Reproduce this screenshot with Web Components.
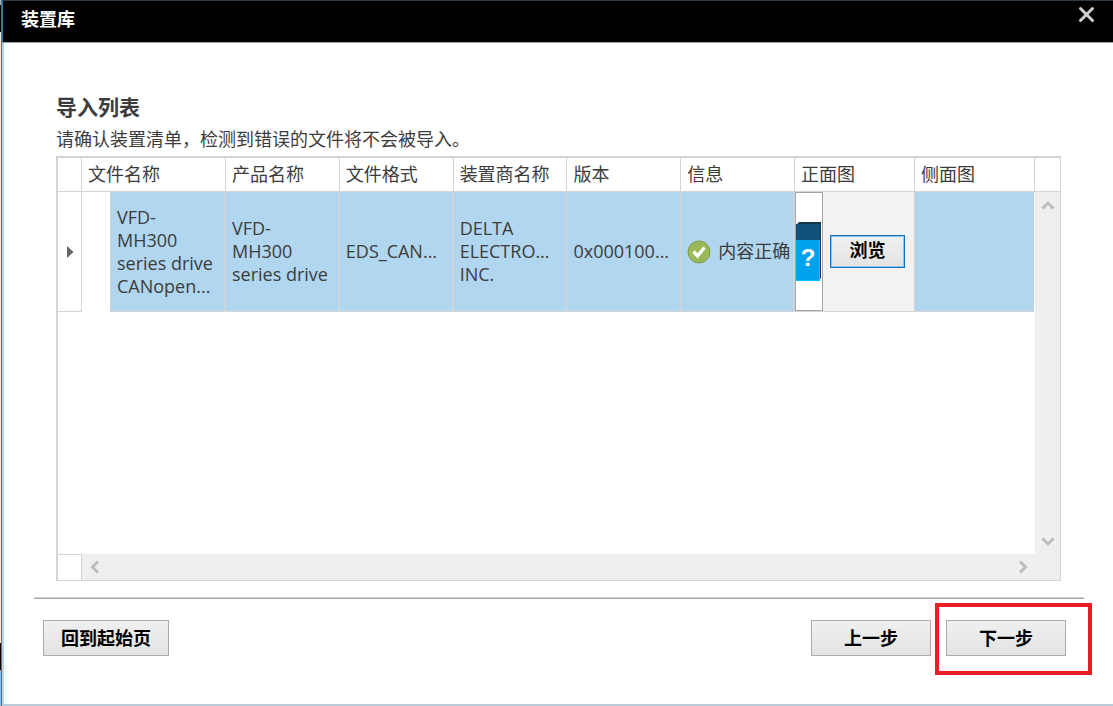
<!DOCTYPE html>
<html lang="zh-CN">
<head>
<meta charset="utf-8">
<title>装置库</title>
<style>
  html, body {
    margin: 0;
    height: 100%;
  }

  body {
    font-family: "Noto Sans CJK SC", "Open Sans", sans-serif;
    font-size: 18px;
    color: #3c3c3c;
    background: #fff;
  }
</style>
</head>
<body>

<library-dialog heading="装置库">
  <import-panel heading="导入列表" hint="请确认装置清单，检测到错误的文件将不会被导入。">
    <device-grid></device-grid>
  </import-panel>
  <wizard-footer slot="footer">
    <push-button slot="start">回到起始页</push-button>
    <push-button size="step">上一步</push-button>
    <push-button size="step" marked>下一步</push-button>
  </wizard-footer>
</library-dialog>

<script>
class LibraryDialog extends HTMLElement {
  constructor() {
    super();
    this.attachShadow({ mode: "open" });
  }

  connectedCallback() {
    this.shadowRoot.innerHTML = `
      <style>
        :host {
          display: flex;
          box-sizing: border-box;
          min-height: 100vh;
          padding-left: 1px;
          background: linear-gradient(#9fb4c4 0 5px, #000 5px 32px, #e8edf0 32px 643px, #000 643px 670px, #8fbbe0 670px);
        }

        .window {
          flex: 1;
          min-width: 0;
          display: flex;
          flex-direction: column;
          border-left: 1px solid #1a80d2;
          background: #fff;
        }

        header {
          display: flex;
          justify-content: space-between;
          align-items: flex-start;
          box-sizing: border-box;
          height: 43px;
          padding: 0 18px;
          background: #000;
          border-top: 1px solid #2c3942;
          border-left: 1px solid #4d6b80;
          border-bottom: 1px solid #a6a6a6;
        }

        h1 {
          margin: 0;
          font-size: 18px;
          line-height: 34px;
          color: #fff;
        }

        .close {
          display: flex;
          margin: 0;
          padding: 5px 0;
          border: 0;
          background: none;
          cursor: pointer;
        }

        main {
          flex: 1;
          display: flex;
          flex-direction: column;
          border-left: 2px solid #c3d2dc;
          border-bottom: 2px solid #bccbd6;
        }
      </style>
      <div class="window">
        <header>
          <h1>${this.getAttribute("heading")}</h1>
          <button class="close" aria-label="关闭">
            <svg width="17" height="17" viewBox="0 0 17 17">
              <path d="M2.500 2.500l12 12M14.500 2.500l-12 12" stroke="#d0d0d0" stroke-width="3" stroke-linecap="round"/>
            </svg>
          </button>
        </header>
        <main>
          <slot></slot>
          <slot name="footer"></slot>
        </main>
      </div>
    `;
  }
}

class ImportPanel extends HTMLElement {
  constructor() {
    super();
    this.attachShadow({ mode: "open" });
  }

  connectedCallback() {
    this.shadowRoot.innerHTML = `
      <style>
        :host {
          flex: 1;
          display: flex;
          flex-direction: column;
          padding: 48px 52px 0;
        }

        h2 {
          margin: 0;
          font-size: 21px;
          line-height: 30px;
        }

        p {
          margin: 0;
          line-height: 35px;
        }
      </style>
      <h2>${this.getAttribute("heading")}</h2>
      <p>${this.getAttribute("hint")}</p>
      <slot></slot>
    `;
  }
}

class PushButton extends HTMLElement {
  constructor() {
    super();
    this.attachShadow({ mode: "open" });
    this.shadowRoot.innerHTML = `
      <style>
        :host {
          display: block;
          position: relative;
        }

        button {
          display: flex;
          justify-content: center;
          box-sizing: border-box;
          height: 36px;
          padding: 0 17px;
          font: inherit;
          font-weight: bold;
          line-height: 32px;
          color: #000;
          white-space: nowrap;
          background: linear-gradient(#f0f0f0, #e3e3e3);
          border: 1px solid #acacac;
          cursor: pointer;
        }

        :host([size="step"]) button {
          width: 120px;
        }

        :host([size="small"]) button {
          width: 75px;
          height: 33px;
          padding: 0;
          line-height: 29px;
          border-color: #0a74c4;
          box-shadow: inset 0 0 0 1px #8fc3ea;
        }

        /* callout frame around the next action */
        :host([marked])::after {
          content: "";
          position: absolute;
          inset: -17px -26px -19px -11px;
          border: 4px solid #ed1c24;
          pointer-events: none;
        }
      </style>
      <button><slot></slot></button>
    `;
  }
}

class WizardFooter extends HTMLElement {
  constructor() {
    super();
    this.attachShadow({ mode: "open" });
    this.shadowRoot.innerHTML = `
      <style>
        :host {
          display: flex;
          justify-content: space-between;
          margin: 16px 29px 0 30px;
          padding: 21px 18px 48px 9px;
          border-top: 1px solid #d0d0d0;
          box-shadow: inset 0 1px #a6a6a6;
          padding-top: 22px;
        }

        .steps {
          display: flex;
          gap: 15px;
        }
      </style>
      <slot name="start"></slot>
      <div class="steps"><slot></slot></div>
    `;
  }
}

class ScrollTrack extends HTMLElement {
  constructor() {
    super();
    this.attachShadow({ mode: "open" });
  }

  connectedCallback() {
    const vertical = this.getAttribute("direction") === "vertical";
    const arrow = (label, path) => `
      <button aria-label="${label}">
        <svg width="14" height="14" viewBox="0 0 14 14">
          <path d="${path}" fill="none" stroke="#bdbdbd" stroke-width="3"/>
        </svg>
      </button>`;
    const arrows = vertical
      ? arrow("向上", "M1.5 10.500L7 5l5.500 5.500") + arrow("向下", "M1.500 4.500L7 10l5.500-5.500")
      : arrow("向左", "M10 1.500L4.500 7l5.500 5.500") + arrow("向右", "M4 1.500L9.500 7 4 12.500");

    this.shadowRoot.innerHTML = `
      <style>
        :host {
          flex: 1;
          display: flex;
          flex-direction: ${vertical ? "column" : "row"};
          justify-content: space-between;
          background: #efefef;
        }

        button {
          display: flex;
          justify-content: center;
          align-items: center;
          width: 25px;
          height: 26px;
          padding: 0;
          border: 0;
          background: none;
        }
      </style>
      ${arrows}
    `;
  }
}

class StatusLabel extends HTMLElement {
  constructor() {
    super();
    this.attachShadow({ mode: "open" });
    this.shadowRoot.innerHTML = `
      <style>
        :host {
          display: flex;
          align-items: center;
          gap: 7px;
          white-space: nowrap;
        }

        svg {
          flex: none;
        }
      </style>
      <svg width="24" height="24" viewBox="0 0 24 24">
        <circle cx="12" cy="12" r="11" fill="#9aba59" stroke="#7f9c48"/>
        <path d="M6.500 11.500l4 4.500 7-8.500" fill="none" stroke="#fff" stroke-width="3.4"/>
      </svg>
      <span><slot></slot></span>
    `;
  }
}

class PicturePicker extends HTMLElement {
  constructor() {
    super();
    this.attachShadow({ mode: "open" });
    this.shadowRoot.innerHTML = `
      <style>
        :host {
          display: flex;
          align-items: center;
          height: 119px;
          gap: 7px;
          background: #f2f2f2;
        }

        .thumb {
          display: flex;
          align-items: center;
          box-sizing: border-box;
          width: 28px;
          height: 119px;
          border: 1px solid #a5a5a5;
          background: #fff;
        }
      </style>
      <div class="thumb">
        <svg width="26" height="60" viewBox="0 0 26 60">
          <path d="M1 2L3 0h22v56l-1 1z" fill="#16384f"/>
          <path d="M0 2h24v16H0z" fill="#0f527c"/>
          <path d="M0 18h24v41H0z" fill="#00a2ed"/>
          <path d="M0 58.500h23.500V18" fill="none" stroke="#00c4ff"/>
          <text x="12" y="44" text-anchor="middle" font-family="Liberation Sans" font-size="24" font-weight="bold" fill="#fff">?</text>
        </svg>
      </div>
      <push-button size="small"><slot></slot></push-button>
    `;
  }
}

class DeviceGrid extends HTMLElement {
  constructor() {
    super();
    this.attachShadow({ mode: "open" });
    this.columns = ["文件名称", "产品名称", "文件格式", "装置商名称", "版本", "信息", "正面图", "侧面图"];
    this.rows = [{
      file: "VFD-<br>MH300<br>series drive<br>CANopen...",
      product: "VFD-<br>MH300<br>series drive",
      format: "EDS_CAN...",
      vendor: "DELTA<br>ELECTRO...<br>INC.",
      version: "0x000100...",
      info: "内容正确"
    }];
  }

  connectedCallback() {
    this.render();
  }

  render() {
    this.shadowRoot.innerHTML = `
      <style>
        :host {
          --line: #d4d4d4;
          flex: 1;
          display: flex;
          flex-direction: column;
          border: 1px solid var(--line);
          border-width: 2px 1px 1px 2px;
        }

        .view {
          flex: 1;
          display: flex;
        }

        .content {
          flex: 1;
          min-width: 0;
        }

        table {
          width: 100%;
          table-layout: fixed;
          border-collapse: separate;
          border-spacing: 0;
        }

        .marker-col { width: 24px; }
        .text-col { width: 11.65%; }
        .picture-col { width: 12.28%; }

        th, td {
          box-sizing: border-box;
          padding: 0 0 0 6px;
          border-right: 1px solid var(--line);
          border-bottom: 1px solid var(--line);
          text-align: left;
          white-space: nowrap;
        }

        th {
          height: 34px;
          font-weight: normal;
          line-height: 31px;
          vertical-align: top;
        }

        td {
          height: 120px;
          font-family: "Open Sans", "Noto Sans CJK SC", sans-serif;
          font-size: 18px;
          line-height: 23px;
          background: #b1d6f0;
          box-shadow: inset -1px 0 #c6d5e0;
        }

        td.marker {
          padding: 0 0 0 8px;
          background: #fff;
          box-shadow: none;
        }

        .marker svg {
          display: block;
        }

        td.file {
          padding: 0;
          background: #fff;
          border-bottom-color: #fff;
        }

        .file div {
          display: flex;
          align-items: center;
          box-sizing: border-box;
          height: 120px;
          margin: 0 0 -1px 28px;
          padding-left: 6px;
          background: #b1d6f0;
          border-left: 1px solid var(--line);
          border-bottom: 1px solid var(--line);
          box-shadow: inset -1px 0 #c6d5e0;
        }

        td.picture {
          padding: 0;
        }

        td:last-child {
          border-right-color: #fff;
          box-shadow: none;
        }

        .side {
          display: flex;
          flex-direction: column;
          width: 25px;
        }

        .side div {
          box-sizing: border-box;
          height: 34px;
          border-bottom: 1px solid var(--line);
        }

        .bottom {
          display: flex;
          height: 26px;
          background: #efefef;
        }

        .corner {
          box-sizing: border-box;
          width: 24px;
          background: #fff;
          border-top: 1px solid var(--line);
          border-right: 1px solid var(--line);
        }

        .gap {
          width: 25px;
        }
      </style>
      <div class="view">
        <div class="content">
          <table>
            <colgroup>
              <col class="marker-col">
              <col>
              <col class="text-col" span="5">
              <col class="picture-col" span="2">
            </colgroup>
            <thead>
              <tr><th></th>${this.columns.map(name => `<th scope="col">${name}</th>`).join('')}</tr>
            </thead>
            <tbody>
              ${this.rows.map(row => `
                <tr>
                  <td class="marker">
                    <svg width="8" height="12" viewBox="0 0 8 12"><path d="M1 0l6.500 6L1 12z" fill="#666"/></svg>
                  </td>
                  <td class="file"><div><span>${row.file}</span></div></td>
                  <td>${row.product}</td>
                  <td>${row.format}</td>
                  <td>${row.vendor}</td>
                  <td>${row.version}</td>
                  <td><status-label>${row.info}</status-label></td>
                  <td class="picture"><picture-picker>浏览</picture-picker></td>
                  <td></td>
                </tr>
              `).join('')}
            </tbody>
          </table>
        </div>
        <div class="side">
          <div></div>
          <scroll-track direction="vertical"></scroll-track>
        </div>
      </div>
      <div class="bottom">
        <div class="corner"></div>
        <scroll-track direction="horizontal"></scroll-track>
        <div class="gap"></div>
      </div>
    `;
  }
}

customElements.define("push-button", PushButton);
customElements.define("scroll-track", ScrollTrack);
customElements.define("status-label", StatusLabel);
customElements.define("picture-picker", PicturePicker);
customElements.define("device-grid", DeviceGrid);
customElements.define("import-panel", ImportPanel);
customElements.define("wizard-footer", WizardFooter);
customElements.define("library-dialog", LibraryDialog);
</script>
</body>
</html>
